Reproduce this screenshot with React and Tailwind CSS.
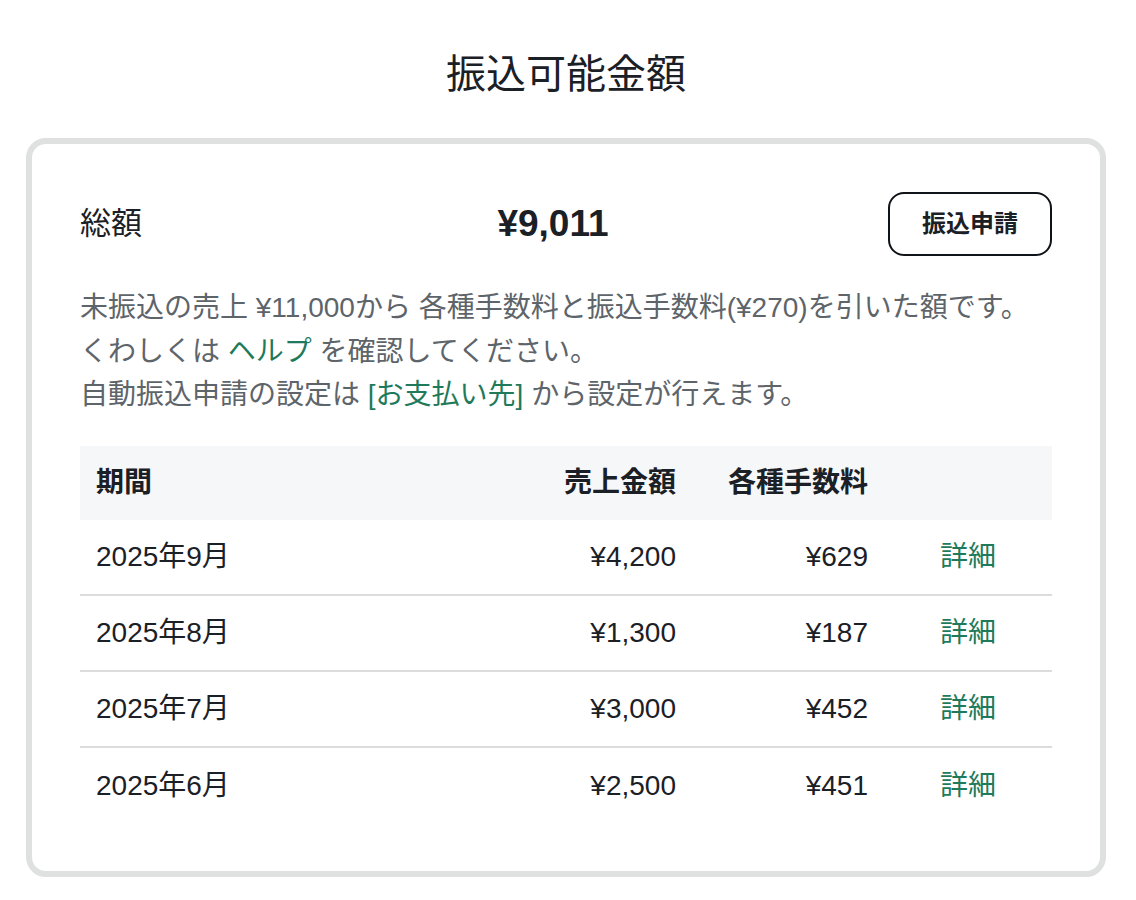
import React from "react";

const ROWS = [
  { period: "2025年9月", sales: "¥4,200", fee: "¥629" },
  { period: "2025年8月", sales: "¥1,300", fee: "¥187" },
  { period: "2025年7月", sales: "¥3,000", fee: "¥452" },
  { period: "2025年6月", sales: "¥2,500", fee: "¥451" },
];

const font = { fontFamily: '"Liberation Sans", "Noto Sans CJK JP", sans-serif' };

export default function App() {
  return (
    <div
      className="min-h-[900px] w-full bg-white pl-[26px] pr-[30px] pt-[45px] pb-6 text-[#1b2026]"
      style={font}
    >
      <h1 className="text-center text-[40px] leading-[58px] font-normal">
        振込可能金額
      </h1>

      <div className="mt-[35px] rounded-[20px] border-[6px] border-[#dfe0e0] px-12 pt-12 pb-[47px]">
        {/* total */}
        <div className="grid grid-cols-[1fr_auto_1fr] items-center">
          <div className="text-[31px]">総額</div>
          <div className="mr-[26px] text-[37px] font-bold">¥9,011</div>
          <div className="flex justify-end">
            <button className="h-16 w-[164px] rounded-2xl border-2 border-[#0f1419] text-[24px] font-bold">
              振込申請
            </button>
          </div>
        </div>

        {/* notes */}
        <div className="mt-[30px] text-[28px] leading-[43.5px] text-[#5d646a]">
          <p>
            未振込の売上 ¥11,000から 各種手数料と振込手数料(¥270)を引いた額です。
          </p>
          <p>
            くわしくは <span className="text-[#1e7a5b]">ヘルプ</span>{" "}
            を確認してください。
          </p>
          <p>
            自動振込申請の設定は{" "}
            <span className="text-[#1e7a5b]">[お支払い先]</span>{" "}
            から設定が行えます。
          </p>
        </div>

        {/* table */}
        <div className="mt-[29px]">
          <div className="grid h-[74px] grid-cols-[1fr_200px_192px_168px] items-center bg-[#f6f7f8] text-[28px] font-bold">
            <div className="pl-4">期間</div>
            <div className="pr-4 text-right">売上金額</div>
            <div className="pr-4 text-right">各種手数料</div>
            <div></div>
          </div>
          {ROWS.map((r, i) => (
            <div
              key={r.period}
              className={
                "grid h-[76px] grid-cols-[1fr_200px_192px_168px] items-center text-[28px] " +
                (i < ROWS.length - 1 ? "border-b-2 border-[#dcdcdc]" : "")
              }
            >
              <div className="pl-4">{r.period}</div>
              <div className="pr-4 text-right">{r.sales}</div>
              <div className="pr-4 text-right">{r.fee}</div>
              <div className="text-center text-[#1e7a5b]">詳細</div>
            </div>
          ))}
        </div>
      </div>
    </div>
  );
}
